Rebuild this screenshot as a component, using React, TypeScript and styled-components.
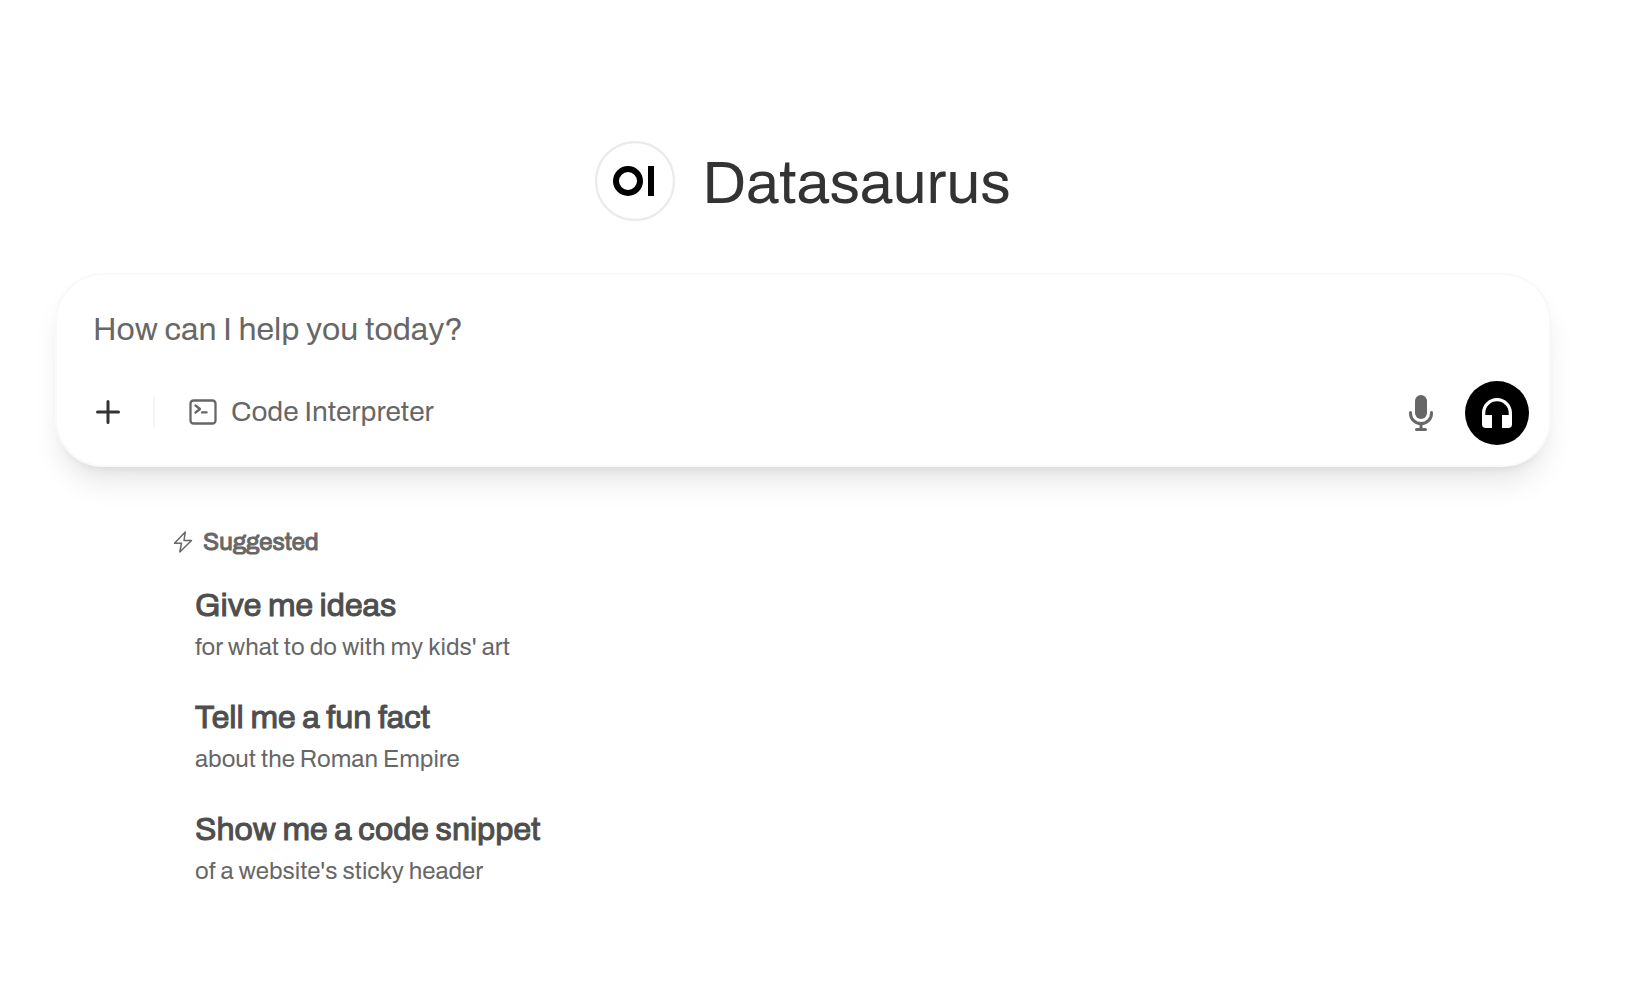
import React from "react";
import styled, { createGlobalStyle } from "styled-components";

const GlobalStyle = createGlobalStyle`
  *, *::before, *::after { box-sizing: border-box; }
  body {
    margin: 0;
    background: #fff;
    color: #333;
    font-family: Archivo, "Liberation Sans", Arial, sans-serif;
  }
  button, input { font: inherit; color: inherit; }
`;

const Page = styled.main`
  min-height: 100vh;
  padding: 141px 83px 48px 55px;
`;

const Header = styled.header`
  display: flex;
  align-items: center;
  justify-content: center;
  gap: 27px;
`;

const Avatar = styled.svg`
  width: 80px;
  height: 80px;
  flex: none;
`;

const ModelName = styled.h1`
  margin: 0;
  padding-top: 4px;
  font-size: 60px;
  line-height: 76px;
  font-weight: 400;
`;

const Composer = styled.form`
  margin-top: 52px;
  padding: 35px 20px 20px;
  border: 2px solid #f9f9f9;
  border-radius: 48px;
  background: #fff;
  box-shadow: 0 20px 30px -6px rgb(0 0 0 / 0.1), 0 8px 12px -8px rgb(0 0 0 / 0.1);
`;

const Prompt = styled.input`
  display: block;
  width: 100%;
  height: 40px;
  padding: 0 16px;
  border: 0;
  outline: 0;
  background: transparent;
  font-size: 32px;
  line-height: 40px;

  &::placeholder {
    color: #676767;
    opacity: 1;
  }
`;

const Toolbar = styled.div`
  display: flex;
  align-items: flex-start;
  justify-content: space-between;
  margin-top: 31px;
`;

const ToolGroup = styled.div<{ $gap: number }>`
  display: flex;
  align-items: center;
  gap: ${({ $gap }) => $gap}px;
`;

const IconButton = styled.button<{ $size: number; $solid?: boolean }>`
  display: flex;
  align-items: center;
  justify-content: center;
  width: ${({ $size }) => $size}px;
  height: ${({ $size }) => $size}px;
  padding: 0;
  border: 0;
  border-radius: 50%;
  background: ${({ $solid }) => ($solid ? "#000" : "transparent")};
  color: ${({ $solid }) => ($solid ? "#fff" : "#676767")};
  cursor: pointer;
`;

const Divider = styled.span`
  width: 2px;
  height: 32px;
  margin: 0 34px 0 14px;
  background: #f6f6f6;
`;

const ToolButton = styled.button`
  display: flex;
  align-items: center;
  gap: 14px;
  padding: 0;
  border: 0;
  background: transparent;
  color: #676767;
  font-size: 28px;
  line-height: 40px;
  cursor: pointer;
`;

const Suggestions = styled.section`
  margin: 55px 118px 0;
`;

const SuggestedLabel = styled.h2`
  display: flex;
  align-items: center;
  gap: 10px;
  margin: 0;
  color: #676767;
  font-size: 24px;
  line-height: 40px;
  font-weight: 400;
  -webkit-text-stroke: 1px currentColor;
`;

const SuggestionList = styled.ul`
  display: grid;
  gap: 30px;
  margin: 22px 0 0;
  padding: 0 22px;
  list-style: none;
`;

const Suggestion = styled.button`
  display: block;
  width: 100%;
  padding: 0;
  border: 0;
  background: transparent;
  text-align: left;
  cursor: pointer;
`;

const SuggestionTitle = styled.span`
  display: block;
  color: #4e4e4e;
  font-size: 32px;
  line-height: 44px;
  -webkit-text-stroke: 1px currentColor;
`;

const SuggestionText = styled.span`
  display: block;
  color: #676767;
  font-size: 24px;
  line-height: 38px;
`;

const suggestions = [
  { title: "Give me ideas", text: "for what to do with my kids' art" },
  { title: "Tell me a fun fact", text: "about the Roman Empire" },
  { title: "Show me a code snippet", text: "of a website's sticky header" },
];

const PlusIcon = () => (
  <svg width="24" height="24" viewBox="0 0 24 24" fill="none" stroke="#333" strokeWidth="3" strokeLinecap="round" aria-hidden="true">
    <path d="M12 1.5v21M1.5 12h21" />
  </svg>
);

const TerminalIcon = () => (
  <svg width="28" height="26" viewBox="0 0 28 26" fill="none" stroke="currentColor" strokeWidth="2.3" strokeLinecap="round" strokeLinejoin="round" aria-hidden="true">
    <rect x="1.5" y="1.5" width="25" height="23" rx="3" />
    <path d="m6.500 6.500 4.500 3.500-4.500 3.500M13 13.400h4.600" />
  </svg>
);

const MicIcon = () => (
  <svg width="24" height="36" viewBox="0 0 24 36" aria-hidden="true">
    <rect x="6" y="0" width="12" height="24" rx="6" fill="currentColor" />
    <path d="M1.5 17.5v1a10.5 10 0 0 0 21 0v-1M12 29v5M7.5 34.5h9" fill="none" stroke="currentColor" strokeWidth="3" strokeLinecap="round" />
  </svg>
);

const HeadphonesIcon = () => (
  <svg width="30" height="30" viewBox="0 0 30 30" fill="currentColor" aria-hidden="true">
    <path d="M15 0C6.7 0 0 6.7 0 15v11.5C0 28.5 1.5 30 3.5 30H10V17H3.3v-2a11.7 11.7 0 0 1 23.4 0v2H20v13h6.5c2 0 3.5-1.5 3.5-3.5V15C30 6.7 23.3 0 15 0Z" />
  </svg>
);

const BoltIcon = () => (
  <svg width="20" height="22" viewBox="0 0 20 22" fill="none" stroke="currentColor" strokeWidth="1.5" strokeLinejoin="round" aria-hidden="true">
    <path d="M12.3 1 1.5 12.2h7L6.8 21 18.5 9.5H11Z" />
  </svg>
);

export default function App() {
  return (
    <>
      <GlobalStyle />
      <Page>
        <Header>
          <Avatar viewBox="0 0 80 80" role="img" aria-label="Model logo">
            <circle cx="40" cy="40" r="39" fill="#fff" stroke="#ebebeb" strokeWidth="2.3" />
            <circle cx="33" cy="40" r="12" fill="none" stroke="#000" strokeWidth="6" />
            <rect x="53" y="25" width="6" height="30" />
          </Avatar>
          <ModelName>Datasaurus</ModelName>
        </Header>

        <Composer onSubmit={(event) => event.preventDefault()}>
          <Prompt type="text" aria-label="Message" placeholder="How can I help you today?" />
          <Toolbar>
            <ToolGroup $gap={0}>
              <IconButton type="button" $size={62} aria-label="More">
                <PlusIcon />
              </IconButton>
              <Divider />
              <ToolButton type="button">
                <TerminalIcon />
                Code Interpreter
              </ToolButton>
            </ToolGroup>
            <ToolGroup $gap={24}>
              <IconButton type="button" $size={40} aria-label="Dictate">
                <MicIcon />
              </IconButton>
              <IconButton type="button" $size={64} $solid aria-label="Voice mode">
                <HeadphonesIcon />
              </IconButton>
            </ToolGroup>
          </Toolbar>
        </Composer>

        <Suggestions>
          <SuggestedLabel>
            <BoltIcon />
            Suggested
          </SuggestedLabel>
          <SuggestionList>
            {suggestions.map(({ title, text }) => (
              <li key={title}>
                <Suggestion type="button">
                  <SuggestionTitle>{title}</SuggestionTitle>
                  <SuggestionText>{text}</SuggestionText>
                </Suggestion>
              </li>
            ))}
          </SuggestionList>
        </Suggestions>
      </Page>
    </>
  );
}
